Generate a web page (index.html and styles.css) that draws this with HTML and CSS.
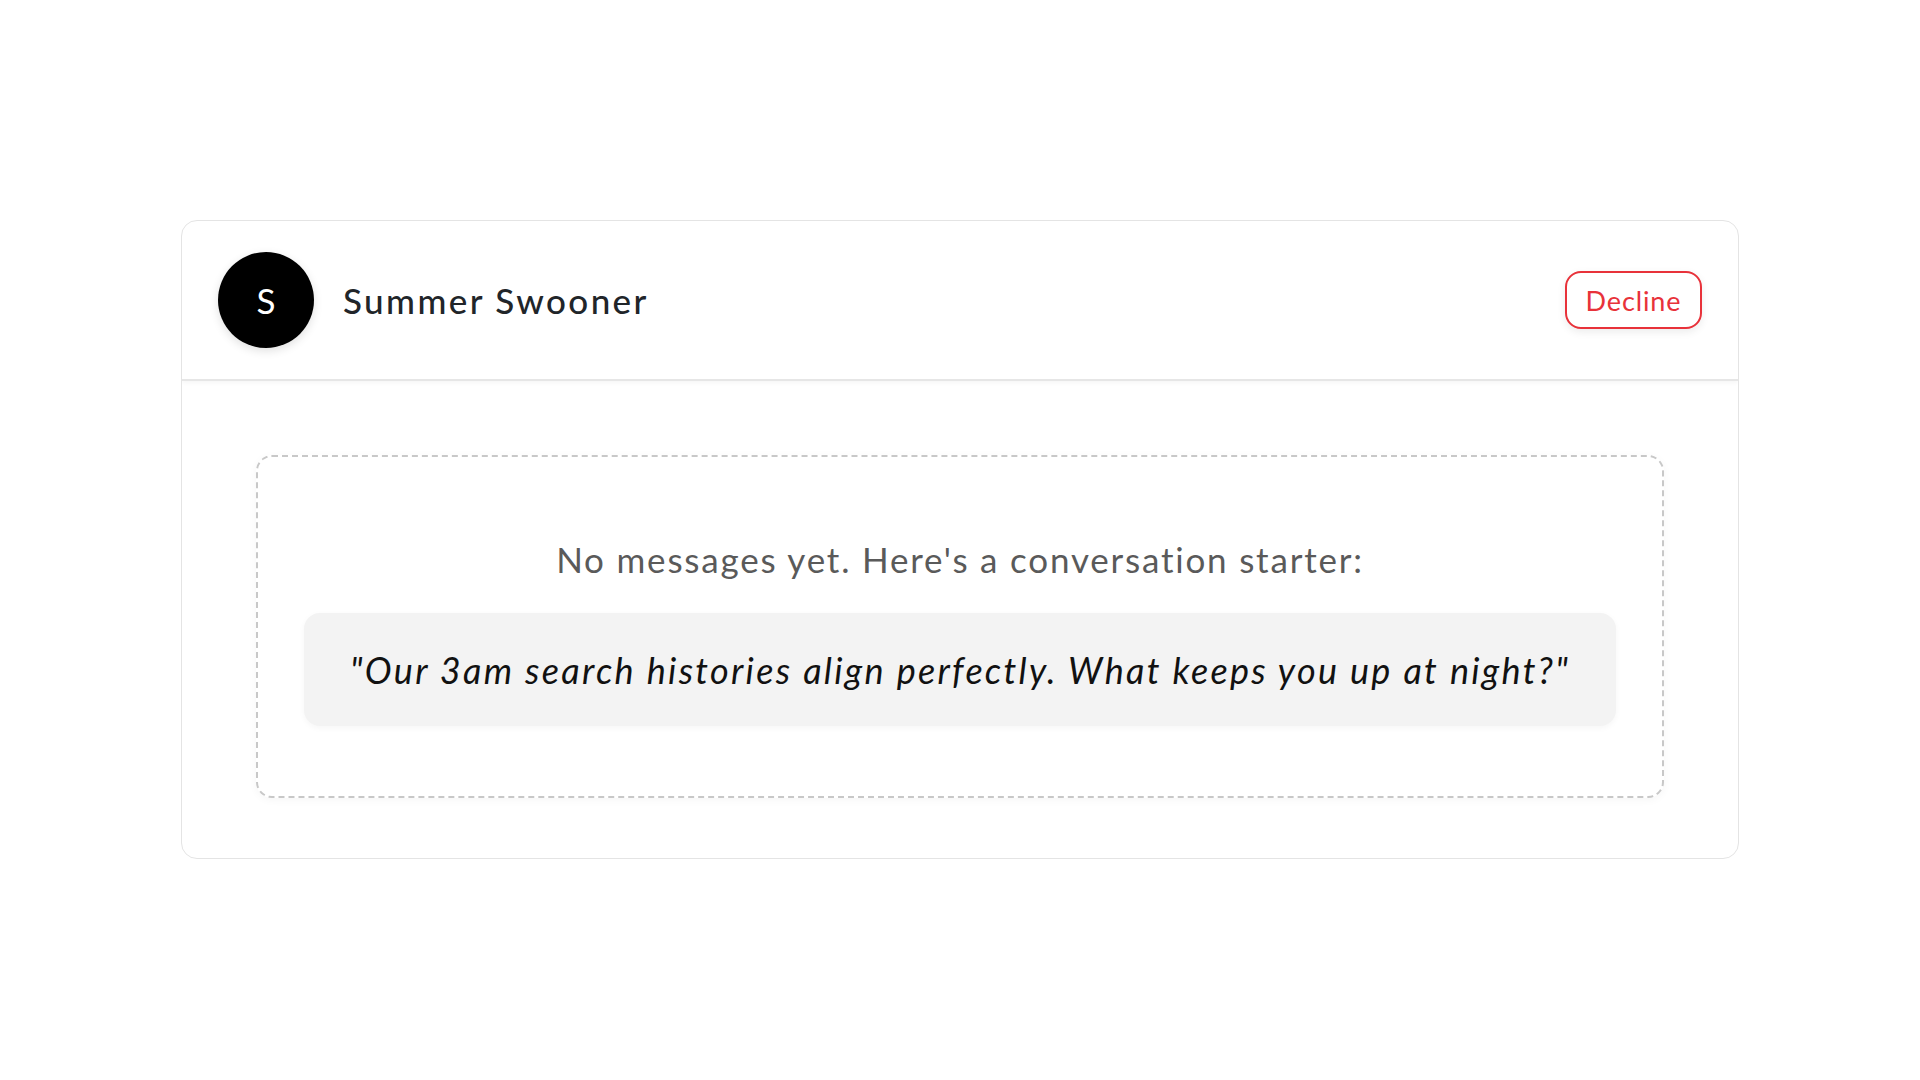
FILE: index.html
```html
<!DOCTYPE html>
<html lang="en">
<head>
<meta charset="utf-8">
<title>Chat</title>
<link rel="stylesheet" href="styles.css">
</head>
<body>
<main class="page">
  <section class="chat-card">
    <header class="chat-header">
      <div class="profile">
        <div class="avatar">S</div>
        <h2 class="name">Summer Swooner</h2>
      </div>
      <button class="decline-btn" type="button">Decline</button>
    </header>
    <div class="chat-body">
      <div class="empty-state">
        <p class="empty-text">No messages yet. Here's a conversation starter:</p>
        <div class="starter">
          <p class="starter-text">"Our 3am search histories align perfectly. What keeps you up at night?"</p>
        </div>
      </div>
    </div>
  </section>
</main>
</body>
</html>
```

FILE: styles.css
```css
* {
  box-sizing: border-box;
}

html, body {
  margin: 0;
  padding: 0;
  background: #ffffff;
}

body {
  font-family: "Lato", "Noto Sans", sans-serif;
  color: #222222;
}

.page {
  padding-top: 220px;
  display: flex;
  justify-content: center;
}

.chat-card {
  width: 1558px;
  border: 1px solid #e4e4e4;
  border-radius: 16px;
  background: #ffffff;
  overflow: hidden;
}

.chat-header {
  display: flex;
  align-items: center;
  justify-content: space-between;
  padding: 31px 36px 31px 36px;
  border-bottom: 2px solid #e6e6e6;
  box-shadow: 0 2px 4px rgba(0, 0, 0, 0.04);
}

.profile {
  display: flex;
  align-items: center;
  gap: 29px;
}

.avatar {
  width: 96px;
  height: 96px;
  border-radius: 50%;
  background: #000000;
  color: #ffffff;
  display: flex;
  align-items: center;
  justify-content: center;
  font-size: 35px;
  font-weight: 400;
  box-shadow: 0 3px 10px rgba(0, 0, 0, 0.12);
}

.name {
  margin: 0;
  font-size: 35px;
  font-weight: 500;
  color: #212529;
  letter-spacing: 2.4px;
}

.decline-btn {
  width: 137px;
  height: 58px;
  border: 2px solid #e8323a;
  border-radius: 16px;
  background: #ffffff;
  color: #e8323a;
  font-family: inherit;
  font-size: 27px;
  letter-spacing: 0.9px;
  padding: 0;
  box-shadow: 0 3px 8px rgba(0, 0, 0, 0.08);
}

.chat-body {
  padding: 74px 74px 60px 74px;
}

.empty-state {
  border: 2px dashed #c8c8c8;
  border-radius: 16px;
  padding: 74px 46px 70px 46px;
  text-align: center;
  box-shadow: 0 2px 8px rgba(0, 0, 0, 0.04);
}

.empty-text {
  margin: 0 0 26px 0;
  font-size: 35px;
  line-height: 56px;
  color: #5a5a5a;
  letter-spacing: 1.8px;
}

.starter {
  background: #f3f3f3;
  border-radius: 16px;
  padding: 30px 20px 29px 20px;
  box-shadow: 0 2px 6px rgba(0, 0, 0, 0.04);
}

.starter-text {
  margin: 0;
  font-size: 36px;
  line-height: 54px;
  font-style: italic;
  color: #111111;
  letter-spacing: 2.3px;
}
```
